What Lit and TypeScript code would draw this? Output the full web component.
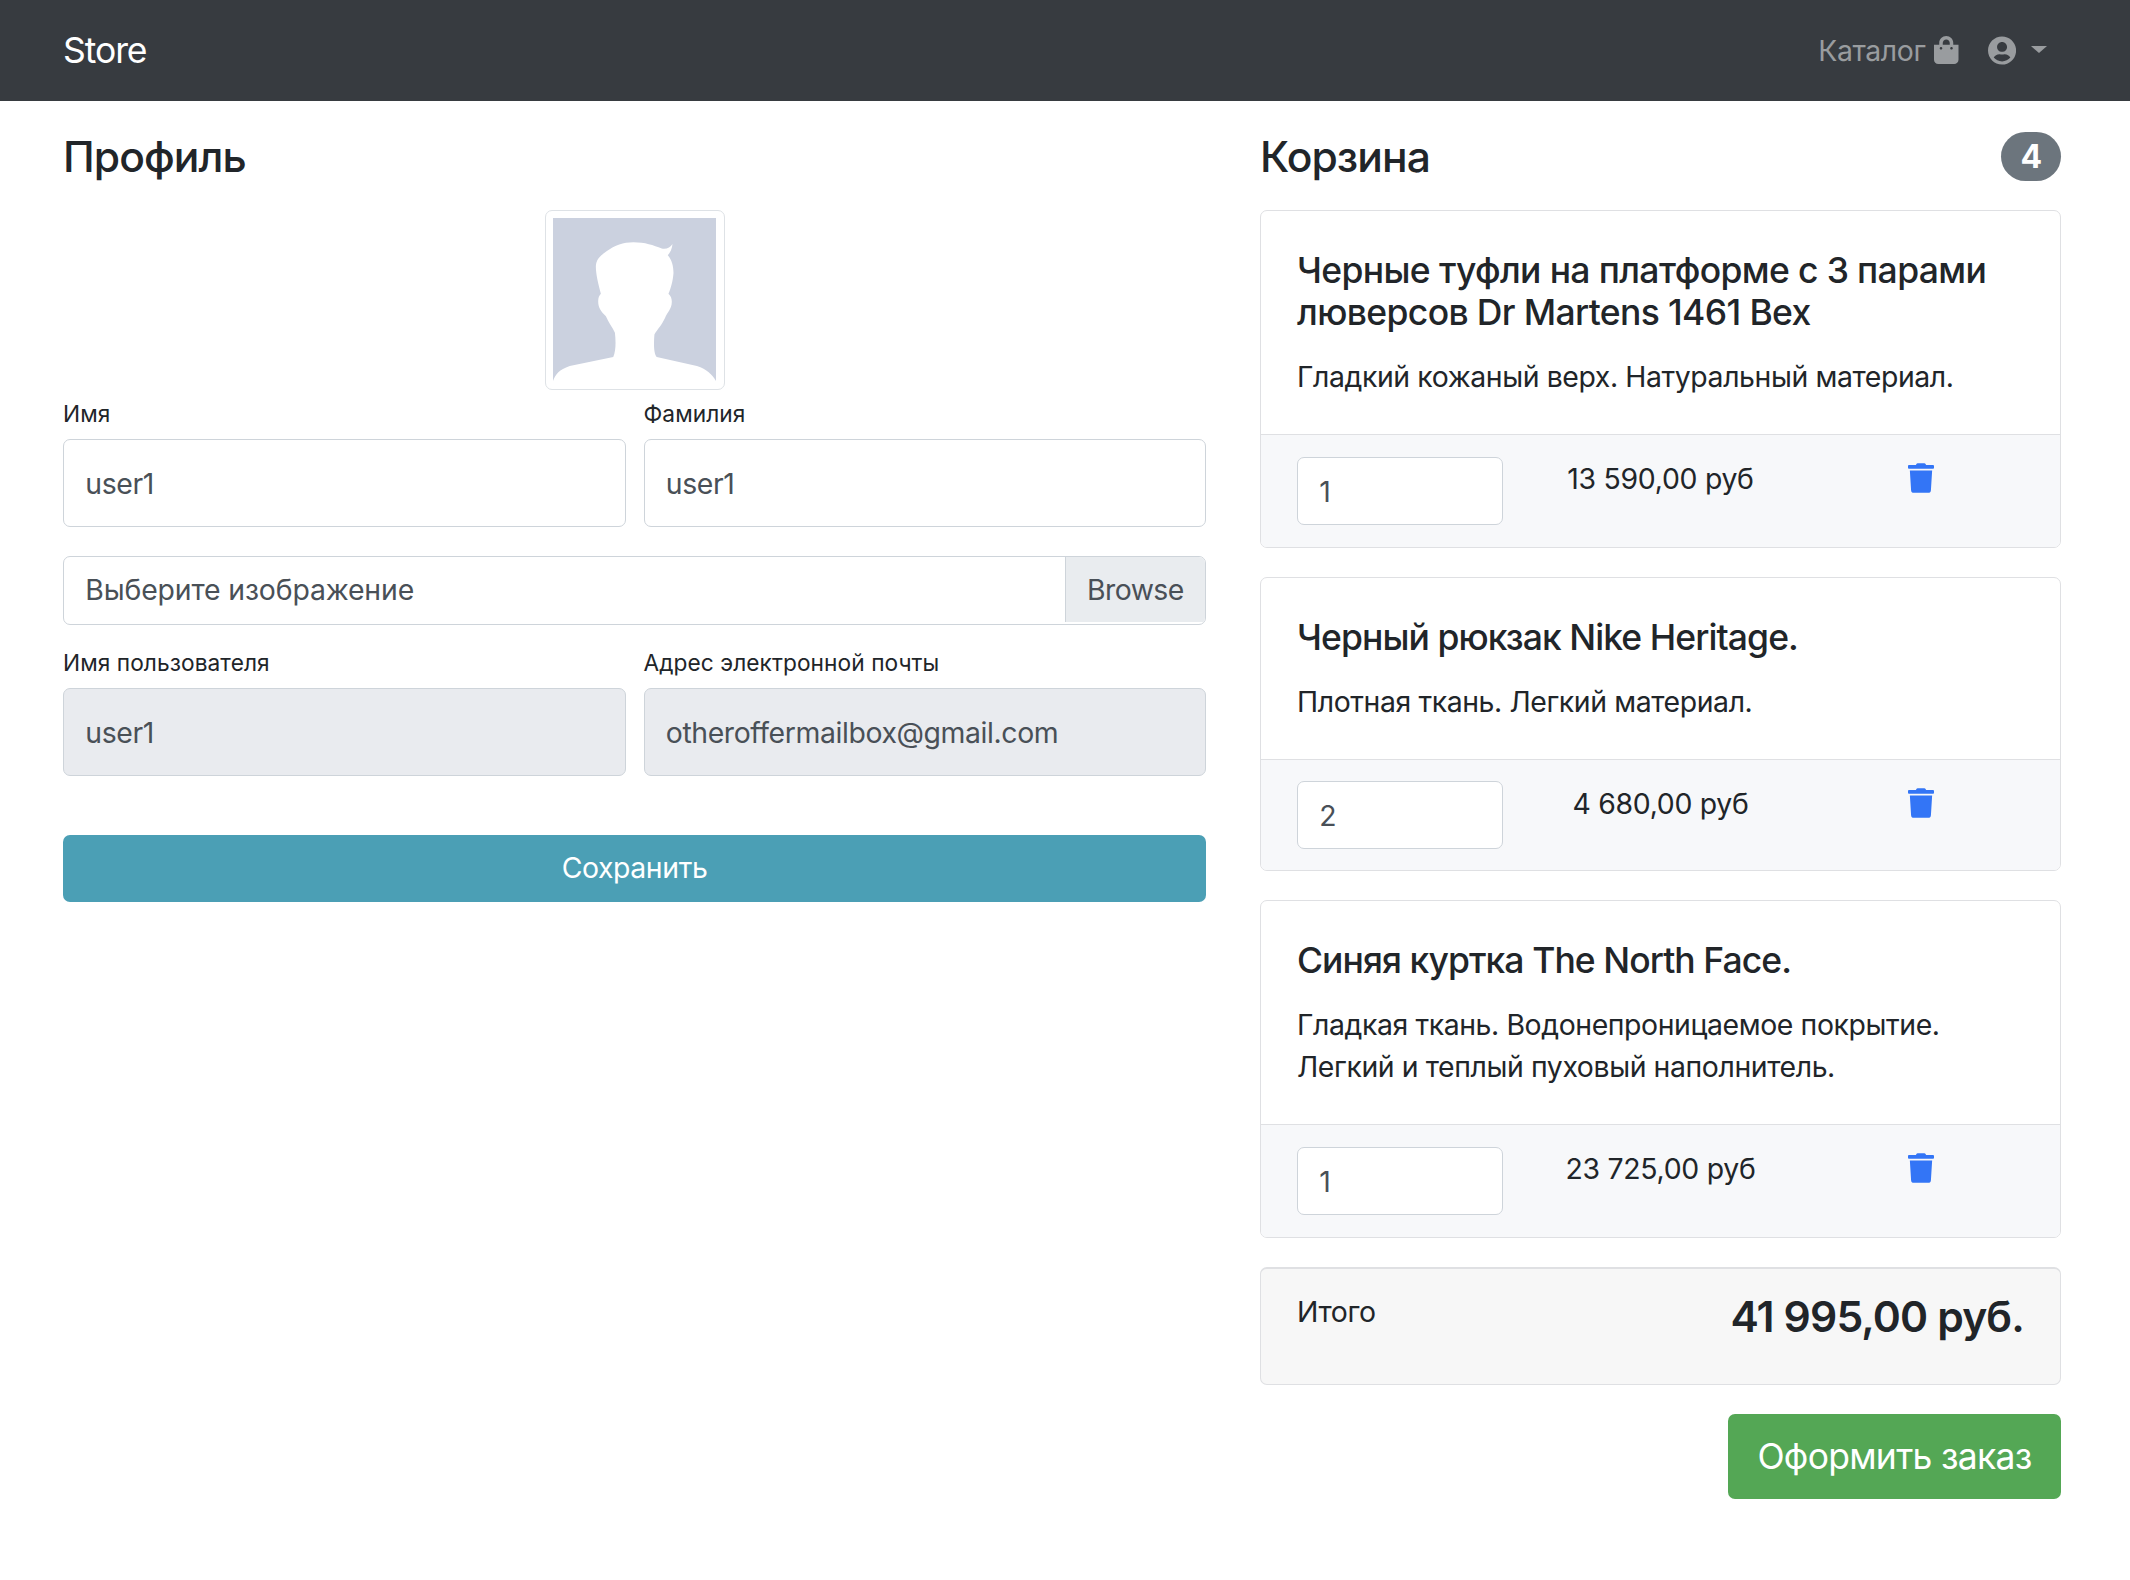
import { LitElement, html, css, svg } from "lit";
import { customElement } from "lit/decorators.js";

const items = [
  {
    title: "Черные туфли на платформе с 3 парами люверсов Dr Martens 1461 Bex",
    desc: ["Гладкий кожаный верх. Натуральный материал."],
    qty: 1,
    price: "13 590,00 руб",
    extra: "",
  },
  {
    title: "Черный рюкзак Nike Heritage.",
    desc: ["Плотная ткань. Легкий материал."],
    qty: 2,
    price: "4 680,00 руб",
    extra: "tight latin",
  },
  {
    title: "Синяя куртка The North Face.",
    desc: ["Гладкая ткань. Водонепроницаемое покрытие.", "Легкий и теплый пуховый наполнитель."],
    qty: 1,
    price: "23 725,00 руб",
    extra: "latin",
  },
];

const bagIcon = svg`<path d="M352 160v-32C352 57.42 294.579 0 224 0 153.42 0 96 57.42 96 128v32H0v272c0 44.183 35.817 80 80 80h288c44.183 0 80-35.817 80-80V160h-96zm-192-32c0-35.29 28.71-64 64-64s64 28.71 64 64v32H160v-32zm160 120c-13.255 0-24-10.745-24-24s10.745-24 24-24 24 10.745 24 24-10.745 24-24 24zm-192 0c-13.255 0-24-10.745-24-24s10.745-24 24-24 24 10.745 24 24-10.745 24-24 24z"/>`;
const userIcon = svg`<path d="M248 8C111 8 0 119 0 256s111 248 248 248 248-111 248-248S385 8 248 8zm0 96c48.6 0 88 39.4 88 88s-39.4 88-88 88-88-39.4-88-88 39.4-88 88-88zm0 344c-58.7 0-111.3-26.6-146.5-68.2 18.8-35.4 55.6-59.8 98.5-59.8 2.4 0 4.8.4 7.1 1.1 13 4.2 26.6 6.9 40.9 6.9 14.3 0 28-2.7 40.9-6.9 2.3-.7 4.7-1.1 7.1-1.1 42.9 0 79.7 24.4 98.5 59.8C359.3 421.4 306.7 448 248 448z"/>`;
const trashIcon = svg`<path d="M432 32H312l-9.4-18.7A24 24 0 0 0 281.1 0H166.8a23.72 23.72 0 0 0-21.4 13.3L136 32H16A16 16 0 0 0 0 48v32a16 16 0 0 0 16 16h416a16 16 0 0 0 16-16V48a16 16 0 0 0-16-16zM53.2 467a48 48 0 0 0 47.9 45h245.8a48 48 0 0 0 47.9-45L416 128H32z"/>`;
// silhouette traced in zoom coords of the placeholder picture
const silhouette = svg`<path d="M100 560C108 540 118 526 150 515L280 488C288 470 288 440 285 415C278 398 266 385 258 365C244 352 235 340 235 320C235 310 238 303 243 298C236 270 228 240 228 215C230 190 245 182 260 170C285 152 310 143 340 143C375 143 400 152 425 162C440 165 450 158 457 148C456 162 450 174 443 182C455 195 460 215 460 235C458 262 452 280 445 298C452 305 455 312 455 322C455 345 440 355 435 370C425 392 412 405 403 420C401 445 400 475 410 488L530 515C560 525 575 540 587 560Z" fill="#fff"/>`;

@customElement("app-root")
export class AppRoot extends LitElement {
  static styles = css`
    :host {
      display: block;
      font-family: Inter, "Liberation Sans", sans-serif;
      font-size: 28.4px;
      line-height: 1.5;
      letter-spacing: -0.014em;
      color: #212529;
      background: #fff;
      min-height: 1580px;
    }
    * {
      box-sizing: border-box;
    }
    .navbar {
      height: 101px;
      background: #373b40;
      display: flex;
      align-items: center;
      justify-content: space-between;
      padding: 0 63px;
    }
    .brand {
      color: #fff;
      font-size: 35.5px;
      letter-spacing: -0.03em;
      padding-top: 1px;
    }
    .nav-right {
      display: flex;
      align-items: center;
      color: #999c9f;
    }
    .nav-right svg {
      fill: #999c9f;
      display: block;
      height: 28px;
    }
    .catalog {
      margin-right: 9px;
      padding-top: 1px;
    }
    .nav-right .user {
      height: 29px;
      margin-left: 29px;
    }
    .caret {
      margin-left: 15px;
      width: 0;
      height: 0;
      border-top: 7.5px solid #999c9f;
      border-left: 8px solid transparent;
      border-right: 8px solid transparent;
      margin-top: -2px;
      margin-right: 20px;
    }
    .main {
      display: grid;
      grid-template-columns: 1143px 801px;
      gap: 54px;
      padding: 30px 69px 0 63px;
    }
    h4 {
      margin: 0;
      font-size: 42.6px;
      line-height: 51px;
      font-weight: 500;
      letter-spacing: -0.022em;
    }
    .head {
      display: flex;
      justify-content: space-between;
      align-items: center;
      margin-bottom: 28px;
    }
    .badge {
      width: 60px;
      height: 49px;
      border-radius: 25px;
      background: #6c757d;
      color: #fff;
      font-size: 32px;
      font-weight: 700;
      line-height: 49px;
      text-align: center;
    }
    .thumb {
      display: block;
      width: 180px;
      height: 180px;
      margin: 0 auto 5px;
      padding: 7px 8px 8px 7px;
      border: 1px solid #dee2e6;
      border-radius: 7px;
    }
    .thumb svg {
      display: block;
      width: 100%;
      height: 100%;
      background: #cbd1df;
    }
    .row {
      display: grid;
      grid-template-columns: 1fr 1fr;
      gap: 18px;
    }
    label {
      display: block;
      font-size: 22.7px;
      line-height: 37px;
      letter-spacing: 0.003em;
      margin-bottom: 7px;
    }
    input {
      display: block;
      width: 100%;
      height: 88px;
      padding: 1px 21.3px 0;
      font: inherit;
      letter-spacing: inherit;
      color: #495057;
      background: #fff;
      border: 1px solid #ced4da;
      border-radius: 7px;
      outline: none;
    }
    input:read-only {
      background: #e9ebef;
    }
    .file {
      display: flex;
      justify-content: space-between;
      height: 69px;
      margin: 29px 0 19px;
      border: 1px solid #ced4da;
      border-radius: 7px;
      color: #495057;
      overflow: hidden;
    }
    .file span {
      padding-left: 21.3px;
      line-height: 65px;
      letter-spacing: -0.005em;
    }
    .file .browse {
      height: 65px;
      padding: 0 21.3px;
      background: #e9ecef;
      border-left: 1px solid #ced4da;
      letter-spacing: -0.02em;
    }
    .save {
      display: block;
      width: 100%;
      height: 67px;
      margin-top: 59px;
      font: inherit;
      letter-spacing: inherit;
      color: #fff;
      background: #4b9fb5;
      border: 0;
      border-radius: 7px;
    }
    .card {
      border: 1px solid #dfe0e3;
      border-radius: 7px;
      margin-bottom: 29.2px;
      overflow: hidden;
    }
    .card-body {
      padding: 38.5px 36px 35.4px;
    }
    h5 {
      margin: 0 0 21.3px;
      font-size: 35.5px;
      line-height: 42.6px;
      font-weight: 500;
      letter-spacing: -0.018em;
    }
    .latin h5 {
      letter-spacing: -0.026em;
    }
    .card-body p {
      margin: 0;
    }
    .card-footer {
      display: grid;
      grid-template-columns: 1fr 1fr 1fr;
      padding: 22px 36px 22px;
      background: #f7f8fa;
      border-top: 1px solid #dfe0e3;
    }
    .qty {
      width: 206px;
      height: 68px;
    }
    .tight .qty {
      margin-top: -1px;
    }
    .tight .card-footer {
      padding-bottom: 21.5px;
    }
    .price {
      text-align: center;
      line-height: 43px;
      letter-spacing: -0.01em;
    }
    .trash {
      justify-self: center;
      margin: 6px 0 0 36px;
      width: 26px;
      height: 30px;
      fill: #3375f6;
    }
    .total {
      display: flex;
      justify-content: space-between;
      align-items: flex-start;
      height: 118px;
      padding: 21.5px 36px;
      background: #f7f7f7;
      border: 1px solid #dfe0e3;
      border-top-width: 2px;
      border-radius: 7px;
    }
    .total strong {
      font-size: 42.6px;
      line-height: 51px;
      font-weight: 600;
      letter-spacing: -0.02em;
    }
    .order-row {
      display: flex;
      justify-content: flex-end;
      margin-top: 29px;
    }
    .order {
      width: 333px;
      height: 85px;
      font: inherit;
      font-size: 35.5px;
      letter-spacing: -0.02em;
      color: #fff;
      background: #54a755;
      border: 0;
      border-radius: 7px;
    }
  `;

  renderItem(item: (typeof items)[number]) {
    return html`
      <div class="card ${item.extra}">
        <div class="card-body">
          <h5>${item.title}</h5>
          <p>${item.desc.map((l) => html`${l}<br />`)}</p>
        </div>
        <div class="card-footer">
          <input class="qty" type="text" .value=${String(item.qty)} />
          <div class="price">${item.price}</div>
          <svg class="trash" viewBox="0 0 448 512">${trashIcon}</svg>
        </div>
      </div>
    `;
  }

  render() {
    return html`
      <nav class="navbar">
        <div class="brand">Store</div>
        <div class="nav-right">
          <span class="catalog">Каталог</span>
          <svg viewBox="0 0 448 512">${bagIcon}</svg>
          <svg class="user" viewBox="0 0 496 512">${userIcon}</svg>
          <span class="caret"></span>
        </div>
      </nav>
      <div class="main">
        <section>
          <div class="head"><h4>Профиль</h4></div>
          <div class="thumb">
            <svg viewBox="100 70 487 490" preserveAspectRatio="none">${silhouette}</svg>
          </div>
          <div class="row">
            <div><label>Имя</label><input .value=${"user1"} /></div>
            <div><label>Фамилия</label><input .value=${"user1"} /></div>
          </div>
          <div class="file">
            <span>Выберите изображение</span>
            <span class="browse">Browse</span>
          </div>
          <div class="row">
            <div><label>Имя пользователя</label><input readonly .value=${"user1"} /></div>
            <div>
              <label>Адрес электронной почты</label>
              <input readonly .value=${"otheroffermailbox@gmail.com"} />
            </div>
          </div>
          <button class="save">Сохранить</button>
        </section>
        <section>
          <div class="head">
            <h4>Корзина</h4>
            <span class="badge">4</span>
          </div>
          ${items.map((i) => this.renderItem(i))}
          <div class="total">
            <span>Итого</span>
            <strong>41 995,00 руб.</strong>
          </div>
          <div class="order-row"><button class="order">Оформить заказ</button></div>
        </section>
      </div>
    `;
  }
}
